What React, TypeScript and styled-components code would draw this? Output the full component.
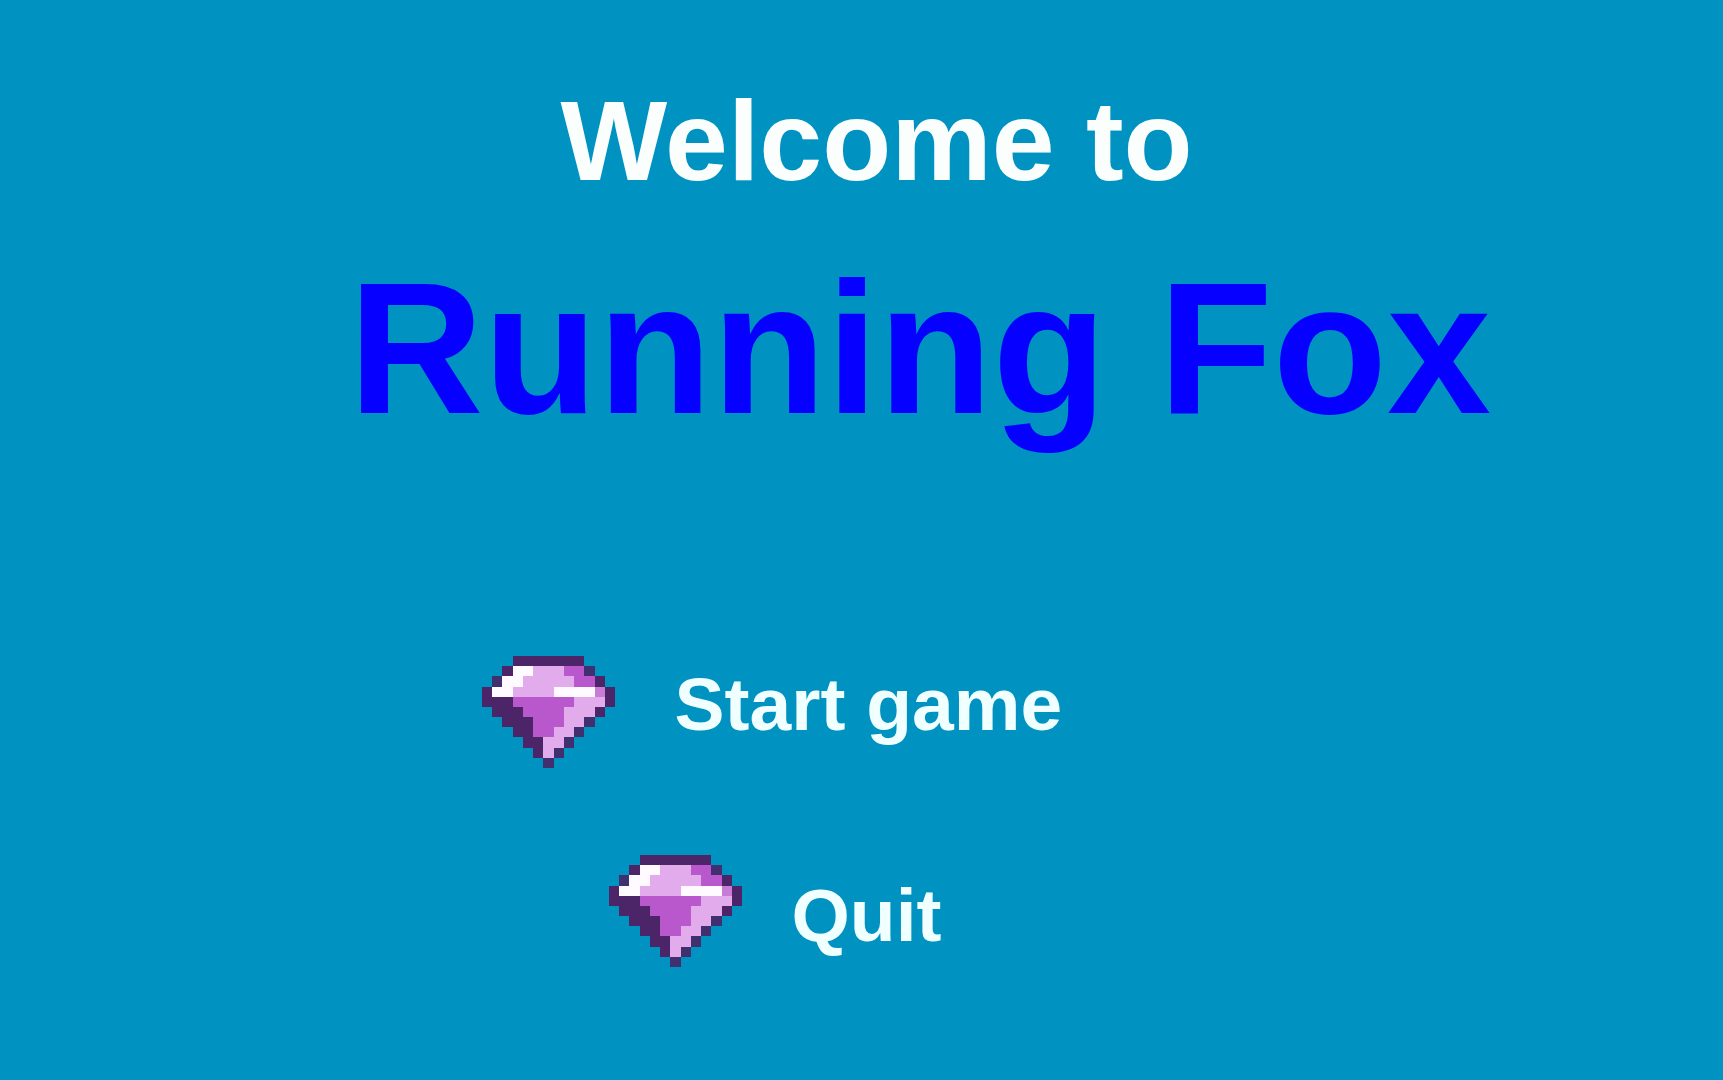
import React from "react";
import styled, { createGlobalStyle } from "styled-components";

const GlobalStyle = createGlobalStyle`
  *, *::before, *::after { box-sizing: border-box; }
  body {
    margin: 0;
    background: #0092c0;
    font-family: "Liberation Sans", Arial, Helvetica, sans-serif;
  }
`;

const Screen = styled.main`
  display: flex;
  flex-direction: column;
  align-items: flex-start;
  min-height: 100vh;
  padding: 81px 0 0;
  overflow-x: hidden;
`;

const Heading = styled.h1`
  display: flex;
  flex-direction: column;
  align-items: flex-start;
  gap: 48px;
  width: 100%;
  margin: 0;
  font-weight: 700;
  white-space: nowrap;
`;

/* "lead" is the distance from the middle of the screen to the start of a line. */
const Greeting = styled.span<{ $lead: number }>`
  margin-left: max(0px, calc(50% - ${(p) => p.$lead}px));
  color: #fafffe;
  font-size: 113px;
  line-height: 120px;
`;

const GameTitle = styled.span<{ $lead: number }>`
  margin-left: max(0px, calc(50% - ${(p) => p.$lead}px));
  color: #0500ff;
  font-size: 187px;
  line-height: 200px;
`;

const Menu = styled.nav`
  display: flex;
  flex-direction: column;
  align-items: flex-start;
  gap: 87px;
  width: 100%;
  padding-top: 207px;
`;

const MenuButton = styled.button<{ $lead: number; $gap: number; $align: string }>`
  display: flex;
  align-items: ${(p) => p.$align};
  gap: ${(p) => p.$gap}px;
  margin: 0 0 0 max(0px, calc(50% - ${(p) => p.$lead}px));
  padding: 0;
  border: 0;
  background: none;
  color: #f0ffff;
  font: inherit;
  font-weight: 700;
  cursor: pointer;
`;

const MenuLabel = styled.span<{ $line: number }>`
  font-size: 75px;
  line-height: ${(p) => p.$line}px;
  white-space: nowrap;
`;

const GemSvg = styled.svg`
  display: block;
  flex: none;
  width: 133px;
  height: 112px;
`;

const gemColors: Record<string, string> = {
  D: "#4c2468",
  E: "#403070",
  W: "#fffaff",
  L: "#e2abec",
  M: "#b958cc",
  P: "#c87cd6",
};

const gemRows = [
  "...DDDDDDD...",
  "..DWWLLLMME..",
  ".EWWLLLLLMMD.",
  "DWWLLLLWWWWPD",
  "DDDMMMMMMLLLD",
  ".DDDMMMMLLLD.",
  "..DDDMMMLLE..",
  "...DDMMLLE...",
  "....DDLLE....",
  ".....DLE.....",
  "......E......",
];

function Gem() {
  return (
    <GemSvg
      viewBox="0 0 13 11"
      preserveAspectRatio="none"
      shapeRendering="crispEdges"
      aria-hidden="true"
    >
      {gemRows.flatMap((row, y) =>
        Array.from(row).map((cell, x) =>
          cell === "." ? null : (
            <rect key={`${x}-${y}`} x={x} y={y} width={1} height={1} fill={gemColors[cell]} />
          )
        )
      )}
    </GemSvg>
  );
}

export default function App() {
  return (
    <>
      <GlobalStyle />
      <Screen>
        <Heading>
          <Greeting $lead={301}>Welcome to</Greeting>
          <GameTitle $lead={513}>Running Fox</GameTitle>
        </Heading>
        <Menu aria-label="Game menu">
          <MenuButton type="button" $lead={380} $gap={60} $align="flex-start">
            <Gem />
            <MenuLabel $line={96}>Start game</MenuLabel>
          </MenuButton>
          <MenuButton type="button" $lead={253} $gap={50} $align="flex-end">
            <Gem />
            <MenuLabel $line={104}>Quit</MenuLabel>
          </MenuButton>
        </Menu>
      </Screen>
    </>
  );
}
